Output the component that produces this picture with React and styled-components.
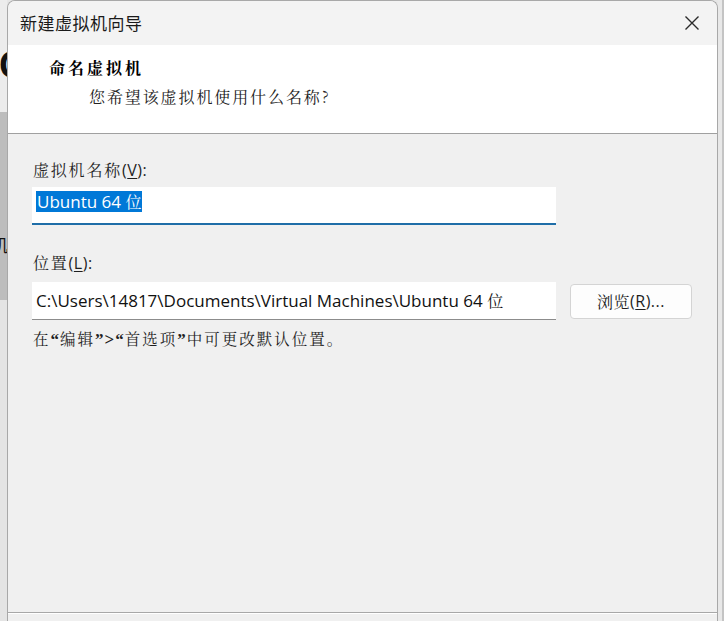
import React from "react";
import styled, { createGlobalStyle } from "styled-components";

const GlobalStyle = createGlobalStyle`
  html, body { margin: 0; padding: 0; }
  body {
    background: #e6e6e6;
    overflow: hidden;
    font-family: "Noto Sans CJK SC", "Noto Sans", sans-serif;
  }
`;

const SERIF = `"Noto Serif CJK SC", "Noto Sans CJK SC", serif`;
const UI = `"Open Sans", "Noto Sans CJK SC", sans-serif`;

const Screen = styled.div`
  display: grid;
  grid-template-columns: 7px 1fr 6px;
  height: 621px;
  width: 724px;
`;

const Strip = styled.div`
  display: flex;
  flex-direction: column;
  overflow: hidden;
`;

const StripSegment = styled.div`
  height: ${(p) => (p.$h ? `${p.$h}px` : "auto")};
  flex: ${(p) => (p.$h ? "none" : "1")};
  background: ${(p) => p.$bg};
  display: flex;
  flex-direction: column;
  overflow: hidden;
  color: #111;
`;

const BigGlyph = styled.div`
  margin-top: ${(p) => p.$top}px;
  margin-left: ${(p) => p.$left}px;
  font-family: ${(p) => (p.$han ? `"Noto Sans CJK SC", sans-serif` : `"Liberation Sans", sans-serif`)};
  font-weight: ${(p) => (p.$han ? 400 : 700)};
  font-size: ${(p) => p.$size}px;
  line-height: 1;
  white-space: nowrap;
`;

const RightStrip = styled.div`
  background: #e8e8e8;
  border-right: 2px solid #c4c4c4;
`;

const Dialog = styled.div`
  display: flex;
  flex-direction: column;
  background: #f0f0f0;
  border: 1px solid #a8a8a8;
  border-bottom: none;
  border-radius: 8px 8px 0 0;
  overflow: hidden;
`;

const TitleBar = styled.div`
  height: 43px;
  flex: none;
  display: flex;
  align-items: center;
  justify-content: space-between;
  padding: 0 17px 1px 12px;
  background: #f3f3f3;
`;

const TitleText = styled.div`
  font-family: "Noto Sans CJK SC", sans-serif;
  font-size: 17px;
  color: #1a1a1a;
  letter-spacing: 0.5px;
`;

const CloseIcon = styled.svg`
  width: 16px;
  height: 16px;
  display: block;
`;

const Header = styled.div`
  height: 89px;
  flex: none;
  background: #ffffff;
  border-bottom: 1px solid #a0a0a0;
  padding: 12px 0 0 41px;
  box-sizing: border-box;
`;

const HeaderTitle = styled.div`
  font-family: ${SERIF};
  font-weight: 700;
  font-size: 16px;
  letter-spacing: 3px;
  line-height: 22px;
  color: #000;
`;

const HeaderSub = styled.div`
  margin: 7px 0 0 40px;
  font-family: ${SERIF};
  font-size: 16px;
  letter-spacing: 1.9px;
  line-height: 22px;
  color: #222;
`;

const Body = styled.div`
  flex: 1;
  display: flex;
  flex-direction: column;
  padding: 24px 24px 0 24px;
`;

const Label = styled.div`
  font-family: ${SERIF};
  font-size: 16px;
  letter-spacing: 1.8px;
  line-height: 24px;
  color: #1e1e1e;
  margin-top: ${(p) => p.$mt || 0}px;
  padding-left: 1px;

  u {
    text-decoration: underline;
    text-underline-offset: 2px;
    letter-spacing: 0.5px;
  }
`;

const Latin = styled.span`
  font-family: ${UI};
  letter-spacing: 0.5px;
`;

const Quote = styled.span`
  font-family: "Liberation Serif", serif;
  font-weight: 700;
  font-size: 17px;
  letter-spacing: 1px;
`;

const Row = styled.div`
  display: flex;
  align-items: center;
  gap: 14px;
  margin-top: ${(p) => p.$mt || 0}px;
`;

const Field = styled.div`
  width: 524px;
  height: 38px;
  box-sizing: border-box;
  background: #ffffff;
  border-bottom: ${(p) => (p.$focused ? "2px solid #1f6ea8" : "1px solid #8c8c8c")};
  display: flex;
  align-items: ${(p) => (p.$focused ? "flex-start" : "center")};
  padding: ${(p) => (p.$focused ? "4px 0 0 4px" : "0 0 0 4px")};
  font-family: ${UI};
  font-size: 17px;
  color: #111;
  white-space: nowrap;
  overflow: hidden;
  margin-top: ${(p) => p.$mt || 0}px;
`;

const Selected = styled.span`
  background: #0078d7;
  color: #ffffff;
  line-height: 21px;
  padding: 0 1px;
`;

const Han = styled.span`
  font-family: ${SERIF};
  font-size: 16px;
`;

const Button = styled.div`
  width: 122px;
  height: 35px;
  box-sizing: border-box;
  background: #fdfdfd;
  border: 1px solid #d4d4d4;
  border-radius: 4px;
  display: flex;
  align-items: center;
  justify-content: center;
  font-family: ${SERIF};
  font-size: 16px;
  color: #1e1e1e;
  letter-spacing: 0.5px;

  u {
    text-decoration: underline;
    text-underline-offset: 2px;
  }
`;

const Help = styled.div`
  margin-top: 7px;
  padding-left: 1px;
  font-family: ${SERIF};
  font-size: 15.5px;
  letter-spacing: 2px;
  line-height: 22px;
  color: #1e1e1e;
`;

const Footer = styled.div`
  height: 8px;
  flex: none;
  border-top: 1px solid #a8a8a8;
  box-shadow: inset 0 1px 0 #ffffff;
  background: #f0f0f0;
`;

export default function App() {
  return (
    <>
      <GlobalStyle />
      <Screen>
        <Strip>
          <StripSegment $h={112} $bg="#ececec">
            <BigGlyph $top={46} $left={-1} $size={38}>C</BigGlyph>
          </StripSegment>
          <StripSegment $h={188} $bg="#bdbdbd">
            <BigGlyph $han $top={124} $left={-9} $size={17}>机</BigGlyph>
          </StripSegment>
          <StripSegment $bg="#e4e4e4" />
        </Strip>

        <Dialog>
          <TitleBar>
            <TitleText>新建虚拟机向导</TitleText>
            <CloseIcon viewBox="0 0 16 16" aria-label="关闭">
              <path d="M1.5 1.5 L14.5 14.5 M14.5 1.5 L1.5 14.5" stroke="#2a2a2a" strokeWidth="1.4" fill="none" />
            </CloseIcon>
          </TitleBar>

          <Header>
            <HeaderTitle>命名虚拟机</HeaderTitle>
            <HeaderSub>您希望该虚拟机使用什么名称?</HeaderSub>
          </Header>

          <Body>
            <Label>
              虚拟机名称<Latin>(<u>V</u>):</Latin>
            </Label>
            <Field $focused $mt={5}>
              <Selected>
                Ubuntu 64 <Han>位</Han>
              </Selected>
            </Field>

            <Label $mt={26}>
              位置<Latin>(<u>L</u>):</Latin>
            </Label>
            <Row $mt={7}>
              <Field>
                C:\Users\14817\Documents\Virtual Machines\Ubuntu 64&nbsp;<Han>位</Han>
              </Field>
              <Button>
                浏览<Latin>(<u>R</u>)...</Latin>
              </Button>
            </Row>

            <Help>
              在<Quote>“</Quote>编辑<Quote>”&gt;“</Quote>首选项<Quote>”</Quote>中可更改默认位置。
            </Help>
          </Body>

          <Footer />
        </Dialog>

        <RightStrip />
      </Screen>
    </>
  );
}
